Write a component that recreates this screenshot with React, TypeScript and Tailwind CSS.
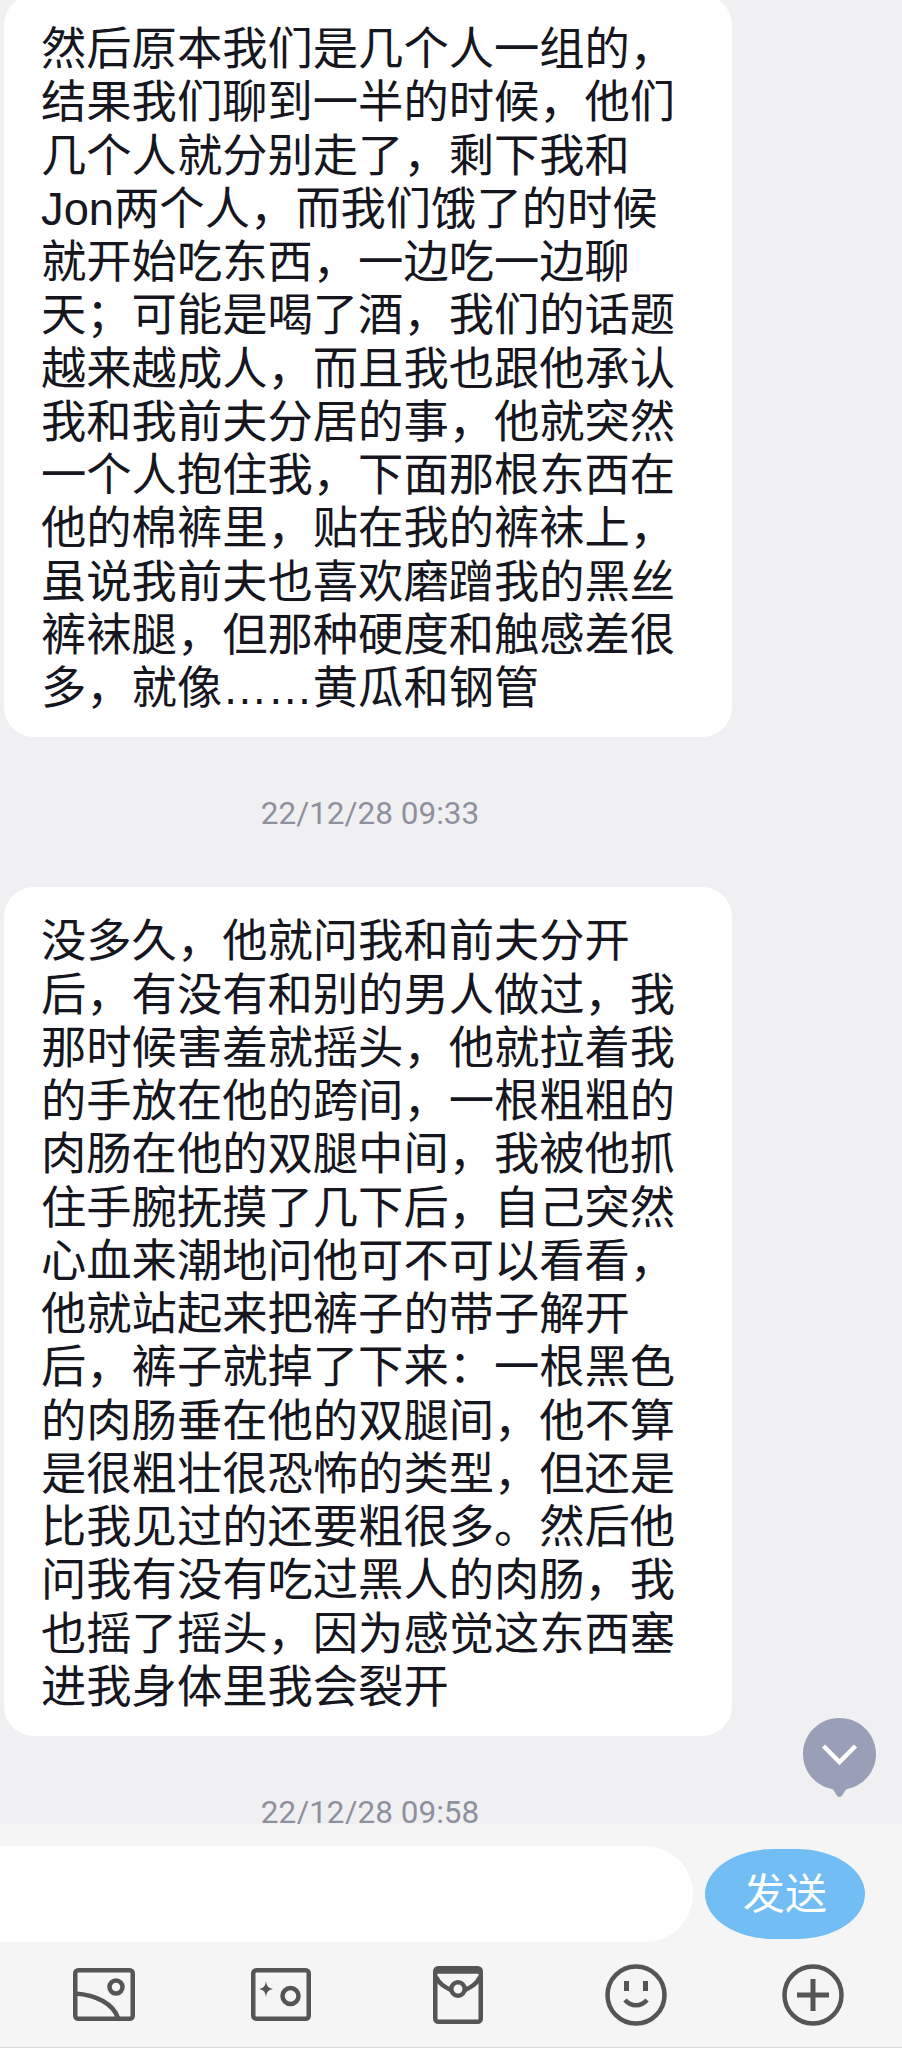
import React from 'react';

// full-width punctuation, the chat text is all CJK
const fw = (s: string) => s.replace(/,/g, '\uFF0C').replace(/;/g, '\uFF1B').replace(/:/g, '\uFF1A');

const firstMessage = [
    '然后原本我们是几个人一组的,',
    '结果我们聊到一半的时候,他们',
    '几个人就分别走了,剩下我和',
    'Jon两个人,而我们饿了的时候',
    '就开始吃东西,一边吃一边聊',
    '天;可能是喝了酒,我们的话题',
    '越来越成人,而且我也跟他承认',
    '我和我前夫分居的事,他就突然',
    '一个人抱住我,下面那根东西在',
    '他的棉裤里,贴在我的裤袜上,',
    '虽说我前夫也喜欢磨蹭我的黑丝',
    '裤袜腿,但那种硬度和触感差很',
    '多,就像……黄瓜和钢管',
].map(fw);

const secondMessage = [
    '没多久,他就问我和前夫分开',
    '后,有没有和别的男人做过,我',
    '那时候害羞就摇头,他就拉着我',
    '的手放在他的跨间,一根粗粗的',
    '肉肠在他的双腿中间,我被他抓',
    '住手腕抚摸了几下后,自己突然',
    '心血来潮地问他可不可以看看,',
    '他就站起来把裤子的带子解开',
    '后,裤子就掉了下来:一根黑色',
    '的肉肠垂在他的双腿间,他不算',
    '是很粗壮很恐怖的类型,但还是',
    '比我见过的还要粗很多。然后他',
    '问我有没有吃过黑人的肉肠,我',
    '也摇了摇头,因为感觉这东西塞',
    '进我身体里我会裂开',
].map(fw);

const Bubble: React.FC<{ lines: string[] }> = ({ lines }) => (
    <div className="ml-[4px] w-[728px] rounded-[30px] bg-white pl-[37px] pt-[28px] pb-[22px] text-[45.3px] leading-[53.25px] text-[#16161f]">
        {lines.map((line) => (
            <div key={line} className="whitespace-nowrap">{line}</div>
        ))}
    </div>
);

const TimeRow: React.FC<{ time: string }> = ({ time }) => (
    <div className="ml-[4px] flex h-[150px] w-[728px] shrink-0 justify-center pt-[66px]">
        <span className="ml-[4px] font-['Roboto',sans-serif] text-[31.5px] leading-[22px] text-[#8f909e]">{time}</span>
    </div>
);

const icons = [
    <svg key="photo" width="62" height="53" viewBox="0 0 62 53" fill="none" stroke="#555555" strokeWidth="4.5">
        <rect x="2.25" y="2.25" width="57.5" height="48.5" rx="3" />
        <circle cx="43" cy="19" r="6.5" />
        <path d="M2 25.5 C24 27 40 36 45 50" />
    </svg>,
    <svg key="camera" width="60" height="53" viewBox="0 0 60 53" fill="none" stroke="#555555" strokeWidth="4.5">
        <rect x="2.25" y="2.25" width="55.5" height="48.5" rx="3" />
        <circle cx="39.5" cy="28" r="8" />
        <path d="M15 13 C15.7 18 17 19.8 22 21 C17 22.2 15.7 24 15 29 C14.3 24 13 22.2 8 21 C13 19.8 14.3 18 15 13 Z" fill="#555555" stroke="none" />
    </svg>,
    <svg key="packet" width="50" height="58" viewBox="0 0 50 58" fill="none" stroke="#555555" strokeWidth="4.5">
        <rect x="2.25" y="2.25" width="45.5" height="53.5" rx="3" />
        <path d="M2 5 H48" strokeWidth="5.5" />
        <path d="M3 11 C6 18 12 21 18 24 M47 11 C44 18 38 21 32 24" />
        <circle cx="25" cy="23" r="6.7" />
    </svg>,
    <svg key="smile" width="62" height="62" viewBox="0 0 62 62" fill="none" stroke="#555555" strokeWidth="4.5">
        <circle cx="31" cy="31" r="28.5" />
        <path d="M21.5 17 V27 M40.5 17 V27" strokeWidth="5" />
        <path d="M20 36 C26 43 36 43 42 36" />
    </svg>,
    <svg key="plus" width="62" height="62" viewBox="0 0 62 62" fill="none" stroke="#555555" strokeWidth="4.5">
        <circle cx="31" cy="31" r="28.5" />
        <path d="M15 31 H47 M31 15 V47" strokeWidth="5" />
    </svg>,
];

export default function App() {
    return (
        <div className="relative flex h-[2048px] w-[902px] flex-col overflow-hidden bg-[#f0f0f2] font-['Liberation_Sans','Noto_Sans_CJK_SC',sans-serif]">
            <div className="min-h-0 flex-1">
                <div className="-mt-[5px]">
                    <Bubble lines={firstMessage} />
                    <TimeRow time="22/12/28 09:33" />
                    <Bubble lines={secondMessage} />
                    <TimeRow time="22/12/28 09:58" />
                </div>
            </div>

            {/* jump to latest */}
            <button className="absolute left-[803px] top-[1718px]">
                <svg width="73" height="80" viewBox="0 0 73 80" className="block">
                    <path d="M36.5 0 C56.5 0 73 16 73 36 C73 54 60 68 44 71 C41 72 40 79 36.5 79 C33 79 32 72 29 71 C13 68 0 54 0 36 C0 16 16.5 0 36.5 0 Z" fill="#9a9fb8" />
                    <path d="M20.5 28 L36.5 44 L52.5 28" fill="none" stroke="#ffffff" strokeWidth="4.5" />
                </svg>
            </button>

            <div className="relative h-[224px] shrink-0 border-b border-[#d8d8da] bg-[#f5f5f6]">
                <div className="flex items-center pt-[22px]">
                    <div className="h-[96px] w-[693px] rounded-r-[48px] bg-white" />
                    <button className="ml-[12px] h-[90px] w-[160px] rounded-[68px/45px] bg-[#73bdf5] text-[42px] text-white">发送</button>
                </div>
                <div className="grid h-[105px] grid-cols-5 items-center pl-[15px]">
                    {icons.map((icon) => (
                        <div key={icon.key} className="flex justify-center">{icon}</div>
                    ))}
                </div>
            </div>
        </div>
    );
}
